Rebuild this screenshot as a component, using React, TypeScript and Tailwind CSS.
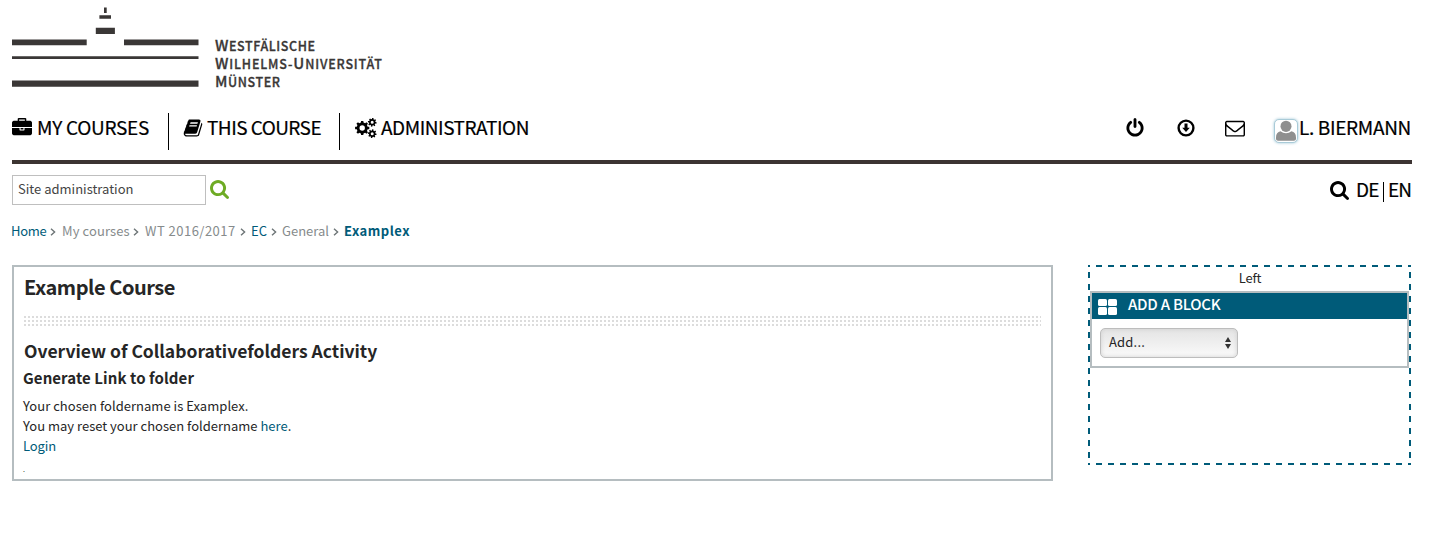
import type { ReactNode } from "react";

const BRIEFCASE =
  "M640 256h512v-128h-512v128zm1152 640v480q0 66-47 113t-113 47h-1472q-66 0-113-47t-47-113v-480h672v160q0 26 19 45t45 19h320q26 0 45-19t19-45v-160h672zm-768 0v128h-256v-128h256zm768-480v384h-1792v-384q0-66 47-113t113-47h352v-160q0-40 28-68t68-28h576q40 0 68 28t28 68v160h352q66 0 113 47t47 113z";
const BOOK =
  "M1703 478q40 57 18 129l-275 906q-19 64-76.5 107.5t-122.5 43.5h-923q-77 0-148.5-53.5t-99.5-131.5q-24-67-2-127 0-4 3-27t4-37q1-8-3-21.5t-3-19.5q2-11 8-21t16.5-23.5 16.5-23.5q23-38 45-91.5t30-91.5q3-10 .5-30t-.5-28q3-11 17-28t17-23q21-36 42-92t25-90q1-9-2.5-32t.5-28q4-13 22-30.5t22-22.5q19-26 42.5-84.5t27.5-96.5q1-8-3-25.5t-2-26.5q2-8 9-18t18-23 17-21q8-12 16.5-30.5t15-35 16-36 19.5-32 26.5-23.5 36-11.5 47.5 5.5l-1 3q38-9 51-9h761q74 0 114 56t18 130l-274 906q-36 119-71.5 153.5t-128.5 34.5h-869q-27 0-38 15-11 16-1 43 24 70 144 70h923q29 0 56-15.5t35-41.5l300-987q7-22 5-57 38 15 59 43zm-1064 2q-4 13 2 22.5t20 9.5h608q13 0 25.5-9.5t16.5-22.5l21-64q4-13-2-22.5t-20-9.5h-608q-13 0-25.5 9.5t-16.5 22.5zm-83 256q-4 13 2 22.5t20 9.5h608q13 0 25.5-9.5t16.5-22.5l21-64q4-13-2-22.5t-20-9.5h-608q-13 0-25.5 9.5t-16.5 22.5z";
const POWER =
  "M1536 896q0 156-61 298t-164 245-245 164-298 61-298-61-245-164-164-245-61-298q0-182 80.5-343t226.5-270q43-32 95.5-25t83.5 50q32 42 24.5 94.5t-49.5 84.5q-98 74-151.5 181t-53.5 228q0 104 40.5 198.5t109.5 163.5 163.5 109.5 198.5 40.5 198.5-40.5 163.5-109.5 109.5-163.5 40.5-198.5q0-121-53.5-228t-151.5-181q-42-32-49.5-84.5t24.5-94.5q31-43 84-50t95 25q146 109 226.5 270t80.5 343zm-640-768v640q0 52-38 90t-90 38-90-38-38-90v-640q0-52 38-90t90-38 90 38 38 90z";
const ENVELOPE =
  "M1664 1504v-768q-32 36-69 66-268 206-426 338-51 43-83 67t-86.5 48.5-102.5 24.5h-2q-48 0-102.5-24.5t-86.5-48.5-83-67q-158-132-426-338-37-30-69-66v768q0 13 9.5 22.5t22.5 9.5h1472q13 0 22.5-9.5t9.5-22.5zm0-1051v-24.5l-.5-13-3-12.5-5.5-9-9-7.5-14-2.5h-1472q-13 0-22.5 9.5t-9.5 22.5q0 168 147 284 193 152 401 317 6 5 35 29.5t46 37.5 44.5 31.5 50.5 27.5 43 9h2q20 0 43-9t50.5-27.5 44.5-31.5 46-37.5 35-29.5q208-165 401-317 54-43 100.5-115.5t46.5-131.5zm128-37v1088q0 66-47 113t-113 47h-1472q-66 0-113-47t-47-113v-1088q0-66 47-113t113-47h1472q66 0 113 47t47 113z";
const SEARCH =
  "M1216 832q0-185-131.5-316.5t-316.5-131.5-316.5 131.5-131.5 316.5 131.5 316.5 316.5 131.5 316.5-131.5 131.5-316.5zm512 832q0 52-38 90t-90 38q-54 0-90-38l-343-342q-179 124-399 124-143 0-273.5-55.5t-225-150-150-225-55.5-273.5 55.5-273.5 150-225 225-150 273.5-55.5 273.5 55.5 225 150 150 225 55.5 273.5q0 220-124 399l343 343q37 37 37 90z";

function Glyph({ d, box, className }: { d: string; box: string; className: string }) {
  return (
    <svg viewBox={box} className={className} fill="currentColor" aria-hidden="true">
      <path d={d} />
    </svg>
  );
}

/** Outline of a gear with a round hole, as an even-odd path. */
function gear(cx: number, cy: number, outer: number, inner: number, hole: number, teeth: number, turn: number) {
  const step = (Math.PI * 2) / teeth;
  const pts: string[] = [];
  for (let i = 0; i < teeth; i++) {
    const a = i * step + turn;
    for (const [r, o] of [[inner, -0.3], [outer, -0.2], [outer, 0.2], [inner, 0.3]]) {
      pts.push(`${(cx + r * Math.cos(a + o * step)).toFixed(2)} ${(cy + r * Math.sin(a + o * step)).toFixed(2)}`);
    }
  }
  return `M${pts.join("L")}ZM${cx - hole} ${cy}a${hole} ${hole} 0 1 0 ${2 * hole} 0a${hole} ${hole} 0 1 0 ${-2 * hole} 0Z`;
}

function Cogs() {
  return (
    <svg viewBox="0 0 22 20" className="h-5 w-[22px]" fill="currentColor" fillRule="evenodd" aria-hidden="true">
      <path d={gear(7.2, 10, 7.2, 5.6, 2.7, 8, 0)} />
      <path d={gear(17.2, 4.3, 4.4, 3.3, 1.5, 8, 0.15)} />
      <path d={gear(17.2, 15.7, 4.4, 3.3, 1.5, 8, 0.15)} />
    </svg>
  );
}

function CircleDown() {
  return (
    <svg viewBox="0 0 18 18" className="size-[18px]" aria-hidden="true">
      <circle cx="9" cy="9" r="7.4" fill="none" stroke="currentColor" strokeWidth="2.4" />
      <path d="M7.5 4.4h3v4.4h2.3L9 12.9 5.2 8.8h2.3z" fill="currentColor" />
    </svg>
  );
}

function Logo() {
  return (
    <svg viewBox="0 0 187 88" className="h-[88px] w-[187px]" fill="#3a3736" aria-hidden="true">
      <path d="M92 7.5h2.7v5.6H92zM87.4 15.3h11.6v3.4H87.4zM83.8 27.7h19.1v6.2H83.8zM0 39.5h74.7v5.7H0zM112 39.5h74.5v5.7H112zM0 56.2h186.5v2.7H0zM0 80.6h186.5v6.2H0z" />
    </svg>
  );
}

function Avatar() {
  return (
    <span className="flex size-[24px] items-end justify-center rounded-[5px] border border-[#a9cbd8] bg-white shadow-[0_0_3px_#9cc4d4]">
      <svg viewBox="0 0 22 22" className="size-[22px]" fill="#8f8f8f" aria-hidden="true">
        <path d="M1 17.5c0-3.6 1.6-5.8 4.6-6.2 1.5 1.3 3.3 1.9 5.4 1.9s3.9-.6 5.4-1.9c3 .4 4.6 2.6 4.6 6.2v1.3c0 1.2-.8 2-2 2H3c-1.2 0-2-.8-2-2z" />
        <ellipse cx="11" cy="6.3" rx="5.5" ry="5.6" />
      </svg>
    </span>
  );
}

function Chevron() {
  return (
    <svg viewBox="0 0 6 8" className="mt-px ml-[4px] mr-[5px] h-2 w-1.5" fill="none" stroke="#6d7577" strokeWidth="1.4" aria-hidden="true">
      <path d="M1 .8 4.6 4 1 7.2" />
    </svg>
  );
}

function Dots() {
  return <div className="h-0.5 bg-[repeating-linear-gradient(90deg,#dcdcdc_0_2px,transparent_2px_4px)]" />;
}

function Small({ children }: { children: ReactNode }) {
  return <span className="text-[12.5px]">{children}</span>;
}

export default function App() {
  return (
    <div className="h-[552px] w-[1438px] overflow-hidden bg-white pl-3 font-['Noto_Sans_CJK_SC','Noto_Sans',sans-serif] text-[13px] leading-5 whitespace-nowrap text-[#262626]">
      <div className="w-[1400px]">
        <header className="flex h-[112px] gap-4">
          <Logo />
          <div className="pt-[36px] text-[15px] leading-[18.2px] font-medium tracking-[0.6px] text-[#3a3736] [-webkit-text-stroke:0.3px_#3a3736]">
            <div className="h-[18.2px]">W<Small>ESTFÄLISCHE</Small></div>
            <div className="h-[18.2px] tracking-[0.85px]">W<Small>ILHELMS-</Small>U<Small>NIVERSITÄT</Small></div>
            <div className="h-[18.2px]">M<Small>ÜNSTER</Small></div>
          </div>
        </header>

        <nav className="flex h-[52px] items-start justify-between border-b-4 border-[#3c3432] pt-px text-[19px] leading-[28px] text-black [-webkit-text-stroke:0.2px_#000]">
          <div className="flex">
            <a className="flex h-[37px] w-[157px] gap-[5px] border-r border-black tracking-[-0.27px]">
              <Glyph d={BRIEFCASE} box="0 0 1792 1792" className="mt-[5px] size-5" />
              MY COURSES
            </a>
            <a className="flex h-[37px] w-[171px] gap-[4px] border-r border-black pl-[14px] tracking-[-0.54px]">
              <Glyph d={BOOK} box="0 0 1792 1792" className="mt-[5px] size-5" />
              THIS COURSE
            </a>
            <a className="flex gap-[4px] pl-[15px] tracking-[-0.46px]">
              <span className="mt-[5px]"><Cogs /></span>
              ADMINISTRATION
            </a>
          </div>
          <div className="flex">
            <Glyph d={POWER} box="0 0 1536 1792" className="mt-[5px] mr-[33px] h-5 w-[18px]" />
            <span className="mt-[6px] mr-[30px]"><CircleDown /></span>
            <Glyph d={ENVELOPE} box="0 0 1792 1792" className="mt-[5px] mr-[29px] size-5" />
            <span className="mt-[6px]"><Avatar /></span>
            <span className="w-[114px] pl-px tracking-[-0.33px]">L. BIERMANN</span>
          </div>
        </nav>

        <div className="flex h-[53px] justify-between pt-[11px]">
          <div className="flex">
            <div className="h-[30px] w-[194px] border border-[#bfbfbf] pt-[3px] pl-[5px] text-[#444]">Site administration</div>
            <Glyph d={SEARCH} box="64 128 1664 1664" className="mt-[5px] ml-[4px] size-[19px] text-[#6eab24]" />
          </div>
          <div className="flex pt-[2px] text-[19px] leading-[24px] tracking-[-0.9px] text-black [-webkit-text-stroke:0.2px_#000]">
            <Glyph d={SEARCH} box="64 128 1664 1664" className="mt-[4px] mr-[7px] size-[19px]" />
            <span className="w-[27px]">DE</span>
            <span className="mt-[5px] h-5 w-px bg-black" />
            <span className="w-[28px] pl-[4px]">EN</span>
          </div>
        </div>

        <div className="-ml-px flex h-[48px] items-start pt-[4px] text-[#868b8c]">
          <span className="w-[35px] tracking-[-0.3px] text-[#005b79]">Home</span>
          <span className="mt-[6px]"><Chevron /></span>
          <span className="w-[68px] pl-px tracking-[0.1px]">My courses</span>
          <span className="mt-[6px]"><Chevron /></span>
          <span className="w-[92px] pl-px tracking-[0.48px]">WT 2016/2017</span>
          <span className="mt-[6px]"><Chevron /></span>
          <span className="w-[16px] text-[#005b79]">EC</span>
          <span className="mt-[6px]"><Chevron /></span>
          <span className="w-[47px]">General</span>
          <span className="mt-[6px]"><Chevron /></span>
          <span className="font-bold tracking-[0.51px] text-[#005b79]">Examplex</span>
        </div>

        <div className="flex items-start gap-[35px]">
          <main className="h-[216px] w-[1041px] border-2 border-[#b5bdc0] pt-[4px] pr-[10px] pl-[10px]">
            <h1 className="h-[45px] text-[20px] leading-[31px] font-bold tracking-[-0.45px]">Example Course</h1>
            <div className="flex flex-col gap-0.5">
              <Dots />
              <Dots />
              <Dots />
            </div>
            <h2 className="mt-[12px] h-[26px] text-[17.5px] leading-[26px] font-bold">Overview of Collaborativefolders Activity</h2>
            <h3 className="-ml-px h-[32px] text-[15px] leading-[27px] font-bold tracking-[0.08px]">Generate Link to folder</h3>
            <div className="-ml-px">
              <p className="tracking-[0.03px]">Your chosen foldername is Examplex.</p>
              <p>You may reset your chosen foldername <a className="text-[#005b79]">here</a>.</p>
              <p><a className="tracking-[-0.1px] text-[#005b79]">Login</a></p>
              <p className="pt-[8px] text-[7px] leading-[10px]">.</p>
            </div>
          </main>

          <aside className="h-[200px] w-[323px] bg-[linear-gradient(90deg,#005b79_6px,transparent_6px),linear-gradient(90deg,#005b79_6px,transparent_6px),linear-gradient(180deg,#005b79_6px,transparent_6px),linear-gradient(180deg,#005b79_6px,transparent_6px)] bg-[length:12px_2px,12px_2px,2px_12px,2px_12px] bg-[position:8px_0px,8px_198px,0px_7px,321px_7px] [background-repeat:repeat-x,repeat-x,repeat-y,repeat-y] p-0.5">
            <div className="h-[24px] pt-px pl-px text-center tracking-[-0.2px]">Left</div>
            <section className="h-[77px] border-2 border-[#b5bdc0] bg-white">
              <h2 className="flex h-[26px] items-center bg-[#005b79] pl-[6px] text-[15px] leading-[22px] font-medium tracking-[-0.25px] text-white">
                <span className="mt-px mr-[11px] grid grid-cols-2 gap-px">
                  <i className="h-[7.5px] w-[9px] rounded-[1.5px] bg-white" />
                  <i className="h-[7.5px] w-[9px] rounded-[1.5px] bg-white" />
                  <i className="h-[7.5px] w-[9px] rounded-[1.5px] bg-white" />
                  <i className="h-[7.5px] w-[9px] rounded-[1.5px] bg-white" />
                </span>
                <span className="-mt-[4px]">ADD A BLOCK</span>
              </h2>
              <div className="mt-[9px] ml-[8px] flex h-[30px] w-[138px] items-center justify-between rounded-[5px] border border-[#bdbdbd] bg-linear-to-b from-[#e4e4e4] to-[#fafafa] pr-[5px] pl-[8px] shadow-[inset_0_0_4px_#d0d0d0]">
                <span className="-mt-[3px] tracking-[0.2px]">Add...</span>
                <svg viewBox="0 0 8 14" className="h-[14px] w-2" fill="#333" aria-hidden="true">
                  <path d="M4 1 7 6H1zM4 13 1 8h6z" />
                </svg>
              </div>
            </section>
          </aside>
        </div>
      </div>
    </div>
  );
}
